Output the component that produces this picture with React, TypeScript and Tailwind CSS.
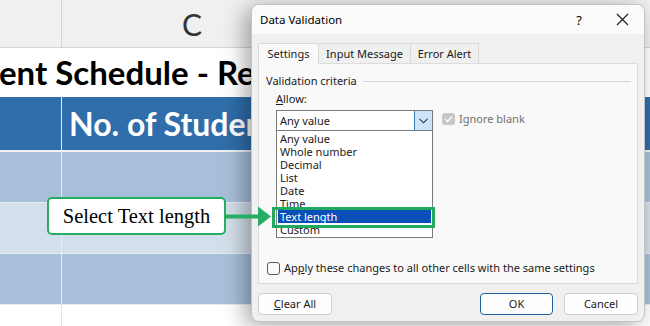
import React from 'react';

const ui = { fontFamily: '"Noto Sans", "Open Sans", Arial, sans-serif' };
const sheet = { fontFamily: 'Lato, "Open Sans", Arial, sans-serif' };

const items = ['Any value', 'Whole number', 'Decimal', 'List', 'Date', 'Time', 'Text length', 'Custom'];

const Sheet: React.FC = () => (
  <div className="flex flex-col w-[650px]" style={sheet}>
    <div className="flex h-[48px] bg-[#f0f0f0] border-b border-[#d4d4d4]">
      <div className="w-[62px] border-r border-[#d4d4d4]" />
      <div className="w-[260px] flex items-center justify-center text-[30px] text-[#333] pt-[2px]">C</div>
    </div>
    <div className="h-[49px] bg-white flex items-center overflow-hidden">
      <span className="whitespace-nowrap text-[33px] font-bold text-black -ml-[1px]">ent Schedule - Report</span>
    </div>
    <div className="flex h-[53px] bg-[#2f6eab]">
      <div className="w-[62px] border-r border-[#e6ecf3]" />
      <div className="pl-[7px] pt-[3px] text-[32px] font-bold text-white whitespace-nowrap">No. of Students</div>
    </div>
    <div className="h-[2px] bg-[#eef2f7]" />
    {['bg-[#a7bfd8]', 'bg-[#d3dfeb]', 'bg-[#a8c0d9]'].map((c, i) => (
      <div key={i} className={`flex h-[51px] ${c} border-b border-[#e6ecf3]`}>
        <div className="w-[62px] border-r border-[#e6ecf3]" />
      </div>
    ))}
    <div className="flex h-[40px] bg-white">
      <div className="w-[62px] border-r border-[#e2e2e2]" />
    </div>
  </div>
);

const Dialog: React.FC = () => (
  <div
    className="absolute left-[251px] top-[4px] w-[394px] h-[318px] bg-[#f0f0f0] rounded-[8px] border border-[#c4c4c4] shadow-[-6px_4px_22px_rgba(0,0,0,0.35)] flex flex-col overflow-hidden text-[11px] leading-[14px] text-[#1a1a1a]"
    style={ui}
  >
    <div className="h-[29px] bg-[#fbfbfb] flex items-center pl-[8px] pr-[12px]">
      <span className="text-[11.5px] text-black">Data Validation</span>
      <span className="ml-auto mr-[34px] text-[13px] text-black">?</span>
      <svg width="13" height="13" viewBox="0 0 13 13" className="mr-[3px]">
        <path d="M1 1 L12 12 M12 1 L1 12" stroke="#222" strokeWidth="1.2" fill="none" />
      </svg>
    </div>
    <div className="flex flex-col px-[6px] pt-[8px]">
      <div className="flex h-[21px] items-end">
        <div className="w-[61px] h-[21px] flex items-center justify-center bg-[#f9f9f9] border border-b-0 border-[#d9d9d9] rounded-t-[2px] relative z-10 -mb-px">Settings</div>
        <div className="w-[92px] h-[20px] flex items-center justify-center bg-[#f0f0f0] border border-l-0 border-b-0 border-[#d9d9d9]">Input Message</div>
        <div className="w-[68px] h-[20px] flex items-center justify-center bg-[#f0f0f0] border border-l-0 border-b-0 border-[#d9d9d9]">Error Alert</div>
      </div>
      <div className="h-[221px] bg-[#f9f9f9] border border-[#dcdcdc] flex flex-col pl-[7px] pr-[6px] pt-[10px]">
        <div className="flex items-center h-[14px]">
          <span>Validation criteria</span>
          <div className="flex-1 h-px bg-[#d6d6d6] ml-[6px]" />
        </div>
        <div className="h-[14px] mt-[4px] pl-[10px]">
          <span className="underline">A</span>llow:
        </div>
        <div className="flex mt-[4px] pl-[10px]">
          <div className="flex flex-col w-[157px]">
            <div className="h-[21px] border border-[#7a7a7a] bg-white flex items-center">
              <span className="pl-[3px] flex-1">Any value</span>
              <div className="w-[18px] h-[19px] bg-[#cce4f7] border-l border-[#3c7fb1] flex items-center justify-center">
                <svg width="9" height="6" viewBox="0 0 9 6">
                  <path d="M0.5 0.8 L4.5 4.8 L8.5 0.8" stroke="#333" strokeWidth="1.1" fill="none" />
                </svg>
              </div>
            </div>
            <div className="h-[107px] border border-t-0 border-[#7a7a7a] bg-white flex flex-col pt-[1px] px-[1px] relative">
              {items.map((t) => (
                <div
                  key={t}
                  className={`h-[13px] leading-[13px] pl-[2px] ${t === 'Text length' ? 'bg-[#0a4fb8] text-white' : ''}`}
                >
                  {t}
                </div>
              ))}
              <div className="absolute left-[-5px] top-[76px] w-[163px] h-[21px] border-[3px] border-[#22a960]" />
            </div>
          </div>
          <div className="flex items-start pt-[3px] ml-[9px]">
            <div className="w-[13px] h-[12px] rounded-[3px] bg-[#c6c6c6] flex items-center justify-center">
              <svg width="9" height="8" viewBox="0 0 9 8">
                <path d="M1 4 L3.5 6.5 L8 1.5" stroke="#fff" strokeWidth="1.3" fill="none" />
              </svg>
            </div>
            <span className="ml-[4px] text-[#707070] leading-[12px]">Ignore blank</span>
          </div>
        </div>
        <div className="flex items-center mt-[23px] h-[14px] pl-[1px]">
          <div className="w-[13px] h-[13px] rounded-[3px] border border-[#5a5a5a] bg-[#f9f9f9]" />
          <span className="ml-[4px]">
            Ap<span className="underline">p</span>ly these changes to all other cells with the same settings
          </span>
        </div>
      </div>
      <div className="flex mt-[9px] items-center">
        <button className="w-[74px] h-[22px] rounded-[4px] border border-[#d0d0d0] bg-[#fdfdfd]">
          <span className="underline">C</span>lear All
        </button>
        <button className="ml-auto w-[73px] h-[22px] rounded-[4px] border border-[#1f5f9e] bg-[#fdfdfd]">OK</button>
        <button className="ml-[11px] w-[74px] h-[22px] rounded-[4px] border border-[#d0d0d0] bg-[#fdfdfd]">Cancel</button>
      </div>
    </div>
  </div>
);

const Callout: React.FC = () => (
  <>
    <div
      className="absolute left-[47px] top-[197px] w-[179px] h-[38px] bg-white border-2 border-[#26ad62] rounded-[5px] flex items-center justify-center text-[20.5px] text-black"
      style={{ fontFamily: '"Liberation Serif", "DejaVu Serif", serif' }}
    >
      Select Text length
    </div>
    <svg className="absolute left-[225px] top-[205px]" width="48" height="23" viewBox="0 0 48 23">
      <rect x="0" y="9.5" width="34" height="4" fill="#26ad62" />
      <path d="M33 1.5 L46 11.5 L33 21.5 Z" fill="#26ad62" />
    </svg>
  </>
);

export default function App() {
  return (
    <div className="relative w-[650px] h-[326px] overflow-hidden bg-white">
      <Sheet />
      <Dialog />
      <Callout />
    </div>
  );
}
